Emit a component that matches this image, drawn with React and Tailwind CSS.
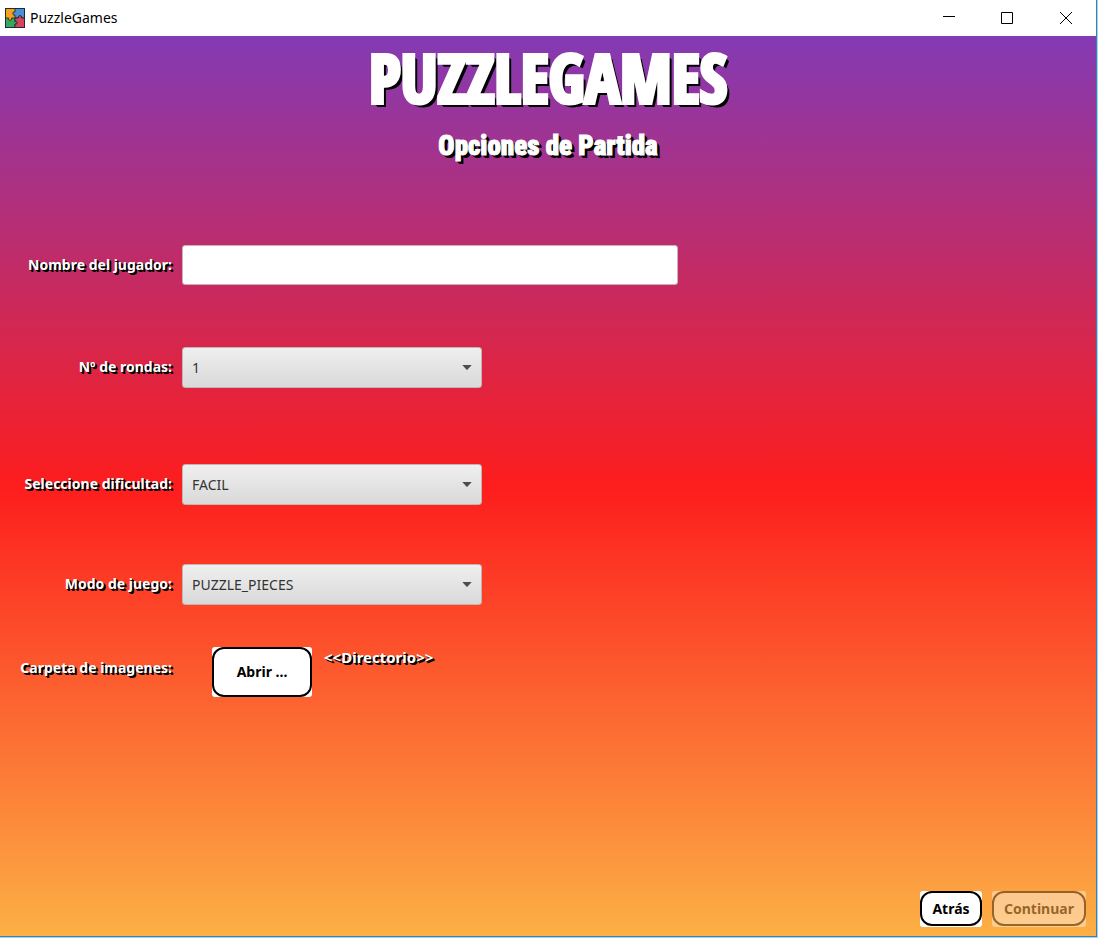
const textClass =
  "leading-5 font-bold text-white [text-shadow:1px_1px_0_#000,2px_2px_0_#000]";

function Field({ id, label, className, labelPad = "pb-px", children }) {
  return (
    <div className={"grid grid-cols-[172px_1fr] items-center gap-x-2.5 " + className}>
      <label htmlFor={id} className={"text-right text-sm " + textClass + " " + labelPad}>
        {label}
      </label>
      {children}
    </div>
  );
}

function Choice({ id, options }) {
  return (
    <div className="relative w-[300px]">
      <select
        id={id}
        className="block h-[41px] w-full appearance-none rounded-[3px] border border-[#c4b4b4] bg-linear-to-b from-[#efefef] to-[#d9d9d9] px-[9px] text-sm text-[#333333]"
      >
        {options.map((option) => (
          <option key={option}>{option}</option>
        ))}
      </select>
      <svg
        className="pointer-events-none absolute top-[18px] right-2.5 h-[5px] w-[10px]"
        viewBox="0 0 10 5"
        fill="#4d4d4d"
        aria-hidden="true"
      >
        <path d="M0.3 0h9.4L5.6 4.6q-.6.6-1.2 0z" />
      </svg>
    </div>
  );
}

function PuzzleLogo() {
  return (
    <svg className="size-5" viewBox="0 0 20 20" aria-hidden="true">
      <rect width="20" height="20" fill="#f6a11a" />
      <g stroke="#1f2a33" strokeWidth="0.9">
        <path d="M10 0H20V10H16.500C17.500 7 12.500 7 13.500 10H10V7C7 8 7 3 10 4Z" fill="#4a90d6" />
        <path d="M0 10H3.500C2.500 13 7.500 13 6.500 10H10V13.500C13 12.500 13 17 10 16V20H0Z" fill="#35a85b" />
        <path d="M10 10H13.500C12.500 7 17.500 7 16.500 10H20V20H10V16C13 17 13 12.500 10 13.500Z" fill="#d8455a" />
      </g>
      <rect x="0.5" y="0.5" width="19" height="19" fill="none" stroke="#1f2a33" />
    </svg>
  );
}

export default function App() {
  return (
    <div className="flex min-h-screen flex-col border-r border-[#a5d5f5] bg-[#a5d5f5] pb-px font-['Noto_Sans','Open_Sans',sans-serif]">
      <div className="flex grow flex-col border-r border-b border-[#3f7fb0]">
        <header className="flex h-9 items-center justify-between bg-white pl-[5px]">
          <div className="flex items-center gap-[5px]">
            <PuzzleLogo />
            <span className="text-sm text-black">PuzzleGames</span>
          </div>
          <div className="flex">
            <button type="button" aria-label="Minimizar" className="grid h-9 w-[58px] place-items-center">
              <svg className="size-3" viewBox="0 0 12 12" stroke="#000" fill="none">
                <path d="M0 4.500h12" />
              </svg>
            </button>
            <button type="button" aria-label="Maximizar" className="grid h-9 w-[58px] place-items-center">
              <svg className="size-3" viewBox="0 0 12 12" stroke="#000" fill="none">
                <path d="M.5.5h11v11H.5z" />
              </svg>
            </button>
            <button type="button" aria-label="Cerrar" className="grid h-9 w-[60px] place-items-center">
              <svg className="size-3" viewBox="0 0 12 12" stroke="#000" fill="none">
                <path d="M0 0l12 12M12 0L0 12" />
              </svg>
            </button>
          </div>
        </header>

        <main className="flex grow flex-col bg-[linear-gradient(to_bottom,#833ab4,#fd1d1d_50%,#fcb045)]">
          <h1 className="h-[86px] text-center font-['Impact','Noto_Sans_ExtraCondensed_Black','Noto_Sans_ExtraCondensed','Open_Sans_Condensed','Roboto_Condensed',sans-serif] text-[66px] leading-[82px] font-black text-white [-webkit-text-stroke:4px_#fff] [text-shadow:1px_1px_0_#000,2px_2px_0_#000,3px_3px_0_#000,4px_4px_0_#000]">
            PUZZLEGAMES
          </h1>
          <h2 className="mt-2 text-center font-['Impact','Roboto_Condensed','Roboto',sans-serif] text-[27px] leading-8 font-black text-white [-webkit-text-stroke:1px_#fff] [text-shadow:1px_1px_0_#000,2px_2px_0_#000,3px_3px_0_#000]">
            Opciones de Partida
          </h2>

          <form className="mt-[83px]">
            <Field id="player" label="Nombre del jugador:" className="pr-2.5">
              <input
                id="player"
                type="text"
                className="h-10 w-full max-w-[496px] rounded-[3px] border border-[#c8b4b8] bg-white px-2.5 text-sm text-[#333333]"
              />
            </Field>
            <Field id="rounds" label="Nº de rondas:" className="mt-[62px]">
              <Choice id="rounds" options={["1", "2", "3"]} />
            </Field>
            <Field id="difficulty" label="Seleccione dificultad:" className="mt-[76px]">
              <Choice id="difficulty" options={["FACIL"]} />
            </Field>
            <Field id="mode" label="Modo de juego:" className="mt-[59px]">
              <Choice id="mode" options={["PUZZLE_PIECES"]} />
            </Field>
            <Field id="folder" label="Carpeta de imagenes:" className="mt-[42px]" labelPad="pb-2">
              <div className="flex pl-[30px]">
                <div className="rounded-[3px] bg-white">
                  <button
                    id="folder"
                    type="button"
                    className="block h-[50px] w-[100px] rounded-xl border-2 border-black bg-white text-sm font-bold text-black"
                  >
                    Abrir ...
                  </button>
                </div>
                <span className={"ml-3 text-[15px] " + textClass}>&lt;&lt;Directorio&gt;&gt;</span>
              </div>
            </Field>
          </form>

          <footer className="mt-auto flex justify-end gap-2.5 pr-2.5 pb-[9px]">
            <div className="rounded-[3px] bg-white pb-px">
              <button
                type="button"
                className="block h-[35px] w-[62px] rounded-xl border-2 border-black bg-white text-sm font-bold text-black"
              >
                Atrás
              </button>
            </div>
            <div className="rounded-[3px] bg-white pb-px opacity-40">
              <button
                type="button"
                disabled
                className="block h-[35px] w-[94px] rounded-xl border-2 border-black bg-white text-sm font-bold text-black"
              >
                Continuar
              </button>
            </div>
          </footer>
        </main>
      </div>
    </div>
  );
}
